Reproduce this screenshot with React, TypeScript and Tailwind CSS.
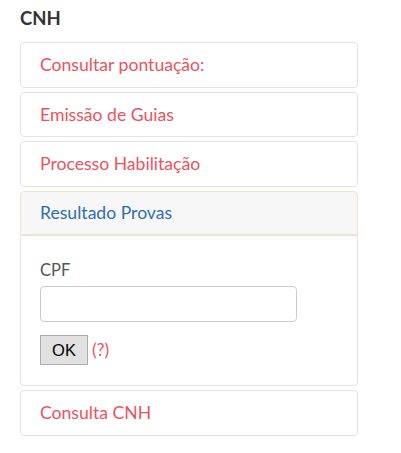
import React from "react";

const Panel = ({ label }: { label: string }) => (
  <div className="h-[45.67px] rounded-[4px] border border-[#e3e3e3] bg-white px-[19px] pt-[12px]">
    <span className="block text-[17.6px] leading-[20px] text-[#f0515c]">{label}</span>
  </div>
);

export default function App() {
  return (
    <div className="h-[453px] w-[401px] bg-white pl-[20px] font-['Lato',sans-serif]">
      <h3 className="pt-[8px] text-[18.5px] font-bold leading-[20px] text-[#333333]">CNH</h3>
      <div className="mt-[14px] flex w-[338px] flex-col gap-[4px]">
        <Panel label="Consultar pontuação:" />
        <Panel label="Emissão de Guias" />
        <Panel label="Processo Habilitação" />
        <div className="flex flex-col">
          <div className="h-[44px] rounded-t-[4px] border border-[#f3e4c6] bg-[#f7f7f7] px-[19px] pt-[11px]">
            <span className="block text-[17.6px] leading-[20px] text-[#2f6db3]">Resultado Provas</span>
          </div>
          <div className="flex h-[151px] flex-col rounded-b-[4px] border border-[#e3e3e3] px-[19px] pt-[24px]">
            <label className="block text-[16.5px] leading-[20px] text-[#555555]">CPF</label>
            <input
              type="text"
              className="mt-[6px] h-[36px] w-[257px] rounded-[4px] border border-[#cccccc] bg-white outline-none"
            />
            <div className="mt-[13px] flex items-center">
              <button className="h-[30px] w-[48px] border border-[#adadad] bg-[#e1e1e1] font-['Liberation_Sans',sans-serif] text-[16.5px] text-black">
                OK
              </button>
              <span className="ml-[4px] text-[17.5px] leading-[20px] text-[#f0515c]">(?)</span>
            </div>
          </div>
        </div>
        <Panel label="Consulta CNH" />
      </div>
    </div>
  );
}
